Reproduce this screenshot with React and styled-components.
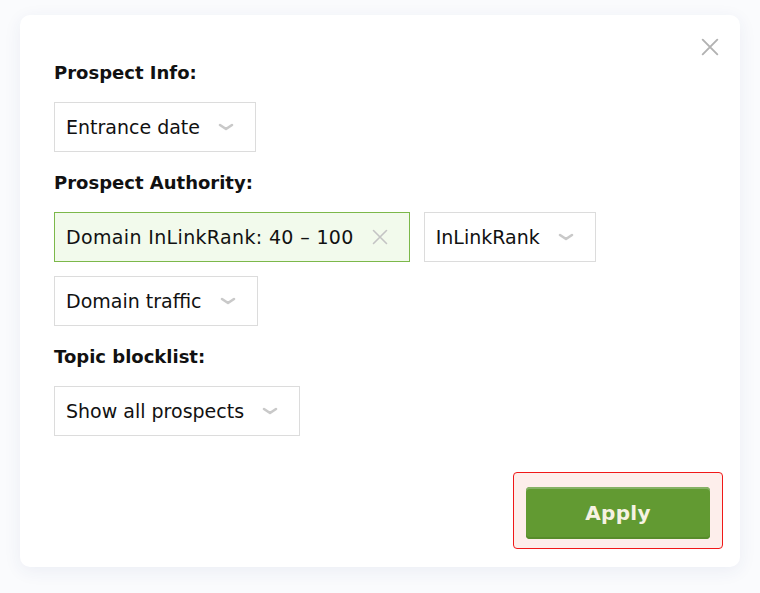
import React from 'react';
import styled, { createGlobalStyle } from 'styled-components';

const GlobalStyle = createGlobalStyle`
  html, body {
    margin: 0;
    padding: 0;
    background: #fafbfd;
    font-family: 'DejaVu Sans', 'Liberation Sans', sans-serif;
    color: #111;
  }
`;

const Page = styled.div`
  width: 760px;
  height: 593px;
  padding: 15px 20px 0;
  box-sizing: border-box;
`;

const Card = styled.div`
  position: relative;
  box-sizing: border-box;
  width: 720px;
  height: 552px;
  background: #fff;
  border-radius: 10px;
  box-shadow: 0 4px 18px rgba(40, 60, 130, 0.07);
  padding: 46px 17px 18px 34px;
  display: flex;
  flex-direction: column;
`;

const CloseBtn = styled.button`
  position: absolute;
  top: 22px;
  right: 20px;
  width: 20px;
  height: 20px;
  padding: 0;
  border: 0;
  background: none;
  display: flex;
  align-items: center;
  justify-content: center;
`;

const Section = styled.div`
  margin-bottom: 19px;
`;

const Heading = styled.div`
  font-size: 18px;
  font-weight: bold;
  line-height: 24px;
  margin-bottom: 17px;
`;

const FieldRow = styled.div`
  display: flex;
  flex-wrap: wrap;
  gap: 14px;
  max-width: 560px;
`;

const Select = styled.div`
  box-sizing: border-box;
  height: 50px;
  display: inline-flex;
  align-items: center;
  gap: 18px;
  padding: 0 21px 0 11px;
  border: 1px solid ${(p) => (p.$active ? '#7cb84a' : '#dcdcdc')};
  background: ${(p) => (p.$active ? '#f2faec' : '#fff')};
  font-size: 19px;
  letter-spacing: ${(p) => (p.$active ? '0.35px' : '0')};
  color: #111;
  white-space: nowrap;
`;

const Footer = styled.div`
  margin-top: auto;
  display: flex;
  justify-content: flex-end;
`;

const Highlight = styled.div`
  padding: 14px 12px 9px 12px;
  border: 1.5px solid #f01818;
  border-radius: 4px;
  background: #fdeeeb;
`;

const ApplyButton = styled.button`
  width: 184px;
  height: 52px;
  border: 0;
  border-radius: 4px;
  background: #629a32;
  box-shadow: inset 0 2px 0 #86b165, inset 0 -2px 0 #578c2b;
  color: #f6f2e2;
  font-family: 'DejaVu Sans', 'Liberation Sans', sans-serif;
  font-size: 20px;
  font-weight: bold;
  letter-spacing: 0.3px;
`;

const Chevron = () => (
  <svg width="16" height="8" viewBox="0 0 16 8">
    <path d="M2 2 L8 6 L14 2" fill="none" stroke="#c9c9c9" strokeWidth="2.6" strokeLinecap="round" strokeLinejoin="round" />
  </svg>
);

const Cross = ({ size = 16, color = '#c4c4c4', width = 1.6 }) => (
  <svg width={size} height={size} viewBox="0 0 16 16">
    <path d="M1.5 1.5 L14.5 14.5 M14.5 1.5 L1.5 14.5" stroke={color} strokeWidth={width} strokeLinecap="round" />
  </svg>
);

const Dropdown = ({ label }) => (
  <Select>
    {label}
    <Chevron />
  </Select>
);

const App = () => (
  <>
    <GlobalStyle />
    <Page>
      <Card>
        <CloseBtn>
          <Cross size={18} color="#b2b2b2" width={1.7} />
        </CloseBtn>

        <Section>
          <Heading>Prospect Info:</Heading>
          <FieldRow>
            <Dropdown label="Entrance date" />
          </FieldRow>
        </Section>

        <Section>
          <Heading>Prospect Authority:</Heading>
          <FieldRow>
            <Select $active>
              Domain InLinkRank: 40 – 100
              <Cross />
            </Select>
            <Dropdown label="InLinkRank" />
            <Dropdown label="Domain traffic" />
          </FieldRow>
        </Section>

        <Section>
          <Heading>Topic blocklist:</Heading>
          <FieldRow>
            <Dropdown label="Show all prospects" />
          </FieldRow>
        </Section>

        <Footer>
          <Highlight>
            <ApplyButton>Apply</ApplyButton>
          </Highlight>
        </Footer>
      </Card>
    </Page>
  </>
);

export default App;
